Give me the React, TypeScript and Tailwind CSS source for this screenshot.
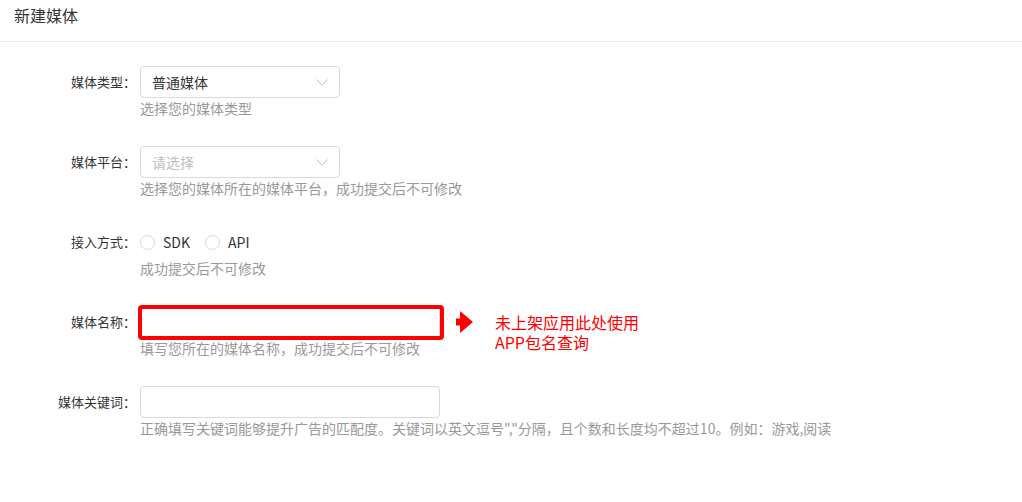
import React from "react";

const font = { fontFamily: '"Noto Sans CJK SC", "Noto Sans", sans-serif' };

function Chevron() {
  return (
    <svg width="12" height="7" viewBox="0 0 12 7" fill="none">
      <path d="M0.5 0.5 L6 6 L11.5 0.5" stroke="#bfbfbf" strokeWidth="1" />
    </svg>
  );
}

function Row({
  label,
  hint,
  children,
}: {
  label: string;
  hint: string;
  children: React.ReactNode;
}) {
  return (
    <div className="flex items-start mb-[28px]">
      <div className="w-[136px] shrink-0 text-right text-[13px] leading-[32px] text-[#333]">{label}</div>
      <div className="ml-[4px] flex flex-col">
        <div className="flex items-start">{children}</div>
        <div className="text-[14px] leading-[20px] text-[#999] whitespace-nowrap">{hint}</div>
      </div>
    </div>
  );
}

function Radio({ label }: { label: string }) {
  return (
    <label className="flex items-center mr-[15px]">
      <span className="w-[15px] h-[15px] rounded-full border border-[#d9d9d9] bg-white" />
      <span className="ml-[8px] text-[14px] text-[#333]">{label}</span>
    </label>
  );
}

export default function App() {
  return (
    <div className="w-full min-h-screen bg-white" style={font}>
      <div className="h-[42px] border-b border-[#e8e8e8] px-[14px] text-[16px] leading-[30px] text-[#333]">新建媒体</div>
      <div className="pt-[24px]">
        <Row label="媒体类型：" hint="选择您的媒体类型">
          <div className="w-[200px] h-[32px] border border-[#d9d9d9] rounded-[4px] flex items-center justify-between pl-[11px] pr-[11px] text-[14px] text-[#333]">
            <span>普通媒体</span>
            <Chevron />
          </div>
        </Row>
        <Row label="媒体平台：" hint="选择您的媒体所在的媒体平台，成功提交后不可修改">
          <div className="w-[200px] h-[32px] border border-[#d9d9d9] rounded-[4px] flex items-center justify-between pl-[11px] pr-[11px] text-[14px] text-[#bfbfbf]">
            <span>请选择</span>
            <Chevron />
          </div>
        </Row>
        <Row label="接入方式：" hint="成功提交后不可修改">
          <div className="h-[32px] flex items-center">
            <Radio label="SDK" />
            <Radio label="API" />
          </div>
        </Row>
        <Row label="媒体名称：" hint="填写您所在的媒体名称，成功提交后不可修改">
          <div className="relative w-[300px] h-[32px]">
            <div className="w-full h-full border border-[#d9d9d9] rounded-[4px] bg-white" />
            <div className="absolute left-[-2px] right-[-4px] top-[-1px] bottom-[-2px] border-[4px] border-[#ff0000] rounded-[4px]" />
            <div className="absolute left-[316px] top-0 flex items-start">
              <svg width="17" height="22" viewBox="0 0 17 22" className="mt-[5px]">
                <rect x="0" y="7.5" width="5" height="7" fill="#ff0000" />
                <polygon points="4,0 17,11 4,22" fill="#ff0000" />
              </svg>
              <div className="ml-[22px] mt-[6px] text-[16px] leading-[20px] text-[#ff0000] whitespace-nowrap">
                <div>未上架应用此处使用</div>
                <div>APP包名查询</div>
              </div>
            </div>
          </div>
        </Row>
        <Row
          label="媒体关键词："
          hint={'正确填写关键词能够提升广告的匹配度。关键词以英文逗号","分隔，且个数和长度均不超过10。例如：游戏,阅读'}
        >
          <div className="w-[300px] h-[32px] border border-[#d9d9d9] rounded-[4px] bg-white" />
        </Row>
      </div>
    </div>
  );
}
